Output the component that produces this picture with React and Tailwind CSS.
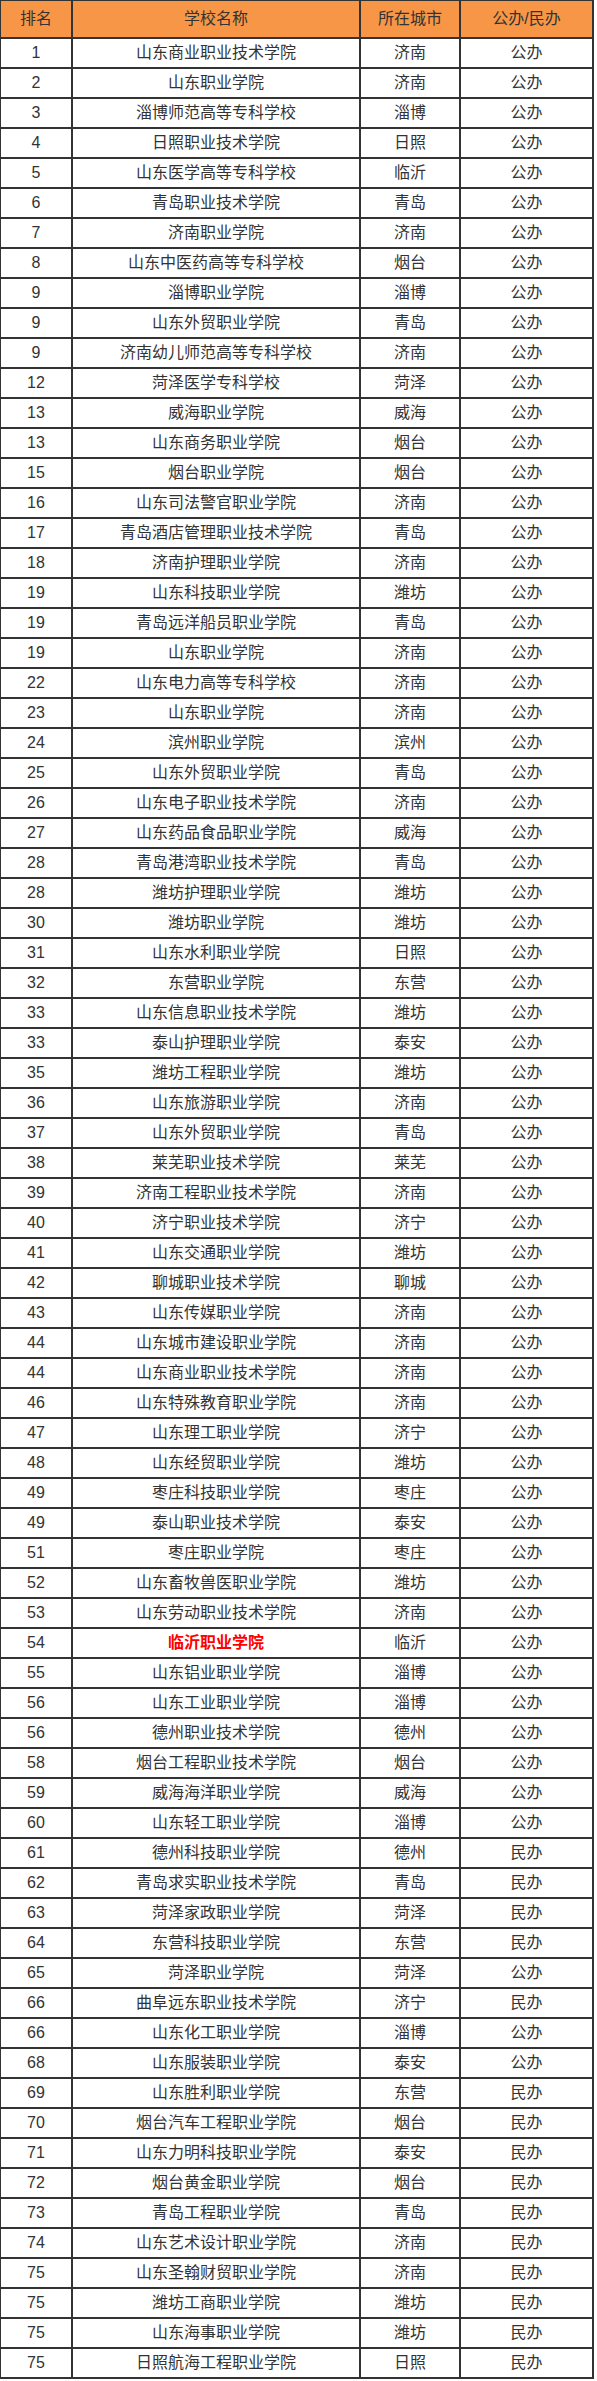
const rows = [
  ["1", "山东商业职业技术学院", "济南", "公办"],
  ["2", "山东职业学院", "济南", "公办"],
  ["3", "淄博师范高等专科学校", "淄博", "公办"],
  ["4", "日照职业技术学院", "日照", "公办"],
  ["5", "山东医学高等专科学校", "临沂", "公办"],
  ["6", "青岛职业技术学院", "青岛", "公办"],
  ["7", "济南职业学院", "济南", "公办"],
  ["8", "山东中医药高等专科学校", "烟台", "公办"],
  ["9", "淄博职业学院", "淄博", "公办"],
  ["9", "山东外贸职业学院", "青岛", "公办"],
  ["9", "济南幼儿师范高等专科学校", "济南", "公办"],
  ["12", "菏泽医学专科学校", "菏泽", "公办"],
  ["13", "威海职业学院", "威海", "公办"],
  ["13", "山东商务职业学院", "烟台", "公办"],
  ["15", "烟台职业学院", "烟台", "公办"],
  ["16", "山东司法警官职业学院", "济南", "公办"],
  ["17", "青岛酒店管理职业技术学院", "青岛", "公办"],
  ["18", "济南护理职业学院", "济南", "公办"],
  ["19", "山东科技职业学院", "潍坊", "公办"],
  ["19", "青岛远洋船员职业学院", "青岛", "公办"],
  ["19", "山东职业学院", "济南", "公办"],
  ["22", "山东电力高等专科学校", "济南", "公办"],
  ["23", "山东职业学院", "济南", "公办"],
  ["24", "滨州职业学院", "滨州", "公办"],
  ["25", "山东外贸职业学院", "青岛", "公办"],
  ["26", "山东电子职业技术学院", "济南", "公办"],
  ["27", "山东药品食品职业学院", "威海", "公办"],
  ["28", "青岛港湾职业技术学院", "青岛", "公办"],
  ["28", "潍坊护理职业学院", "潍坊", "公办"],
  ["30", "潍坊职业学院", "潍坊", "公办"],
  ["31", "山东水利职业学院", "日照", "公办"],
  ["32", "东营职业学院", "东营", "公办"],
  ["33", "山东信息职业技术学院", "潍坊", "公办"],
  ["33", "泰山护理职业学院", "泰安", "公办"],
  ["35", "潍坊工程职业学院", "潍坊", "公办"],
  ["36", "山东旅游职业学院", "济南", "公办"],
  ["37", "山东外贸职业学院", "青岛", "公办"],
  ["38", "莱芜职业技术学院", "莱芜", "公办"],
  ["39", "济南工程职业技术学院", "济南", "公办"],
  ["40", "济宁职业技术学院", "济宁", "公办"],
  ["41", "山东交通职业学院", "潍坊", "公办"],
  ["42", "聊城职业技术学院", "聊城", "公办"],
  ["43", "山东传媒职业学院", "济南", "公办"],
  ["44", "山东城市建设职业学院", "济南", "公办"],
  ["44", "山东商业职业技术学院", "济南", "公办"],
  ["46", "山东特殊教育职业学院", "济南", "公办"],
  ["47", "山东理工职业学院", "济宁", "公办"],
  ["48", "山东经贸职业学院", "潍坊", "公办"],
  ["49", "枣庄科技职业学院", "枣庄", "公办"],
  ["49", "泰山职业技术学院", "泰安", "公办"],
  ["51", "枣庄职业学院", "枣庄", "公办"],
  ["52", "山东畜牧兽医职业学院", "潍坊", "公办"],
  ["53", "山东劳动职业技术学院", "济南", "公办"],
  ["54", "临沂职业学院", "临沂", "公办", true],
  ["55", "山东铝业职业学院", "淄博", "公办"],
  ["56", "山东工业职业学院", "淄博", "公办"],
  ["56", "德州职业技术学院", "德州", "公办"],
  ["58", "烟台工程职业技术学院", "烟台", "公办"],
  ["59", "威海海洋职业学院", "威海", "公办"],
  ["60", "山东轻工职业学院", "淄博", "公办"],
  ["61", "德州科技职业学院", "德州", "民办"],
  ["62", "青岛求实职业技术学院", "青岛", "民办"],
  ["63", "菏泽家政职业学院", "菏泽", "民办"],
  ["64", "东营科技职业学院", "东营", "民办"],
  ["65", "菏泽职业学院", "菏泽", "公办"],
  ["66", "曲阜远东职业技术学院", "济宁", "民办"],
  ["66", "山东化工职业学院", "淄博", "公办"],
  ["68", "山东服装职业学院", "泰安", "公办"],
  ["69", "山东胜利职业学院", "东营", "民办"],
  ["70", "烟台汽车工程职业学院", "烟台", "民办"],
  ["71", "山东力明科技职业学院", "泰安", "民办"],
  ["72", "烟台黄金职业学院", "烟台", "民办"],
  ["73", "青岛工程职业学院", "青岛", "民办"],
  ["74", "山东艺术设计职业学院", "济南", "民办"],
  ["75", "山东圣翰财贸职业学院", "济南", "民办"],
  ["75", "潍坊工商职业学院", "潍坊", "民办"],
  ["75", "山东海事职业学院", "潍坊", "民办"],
  ["75", "日照航海工程职业学院", "日照", "民办"],
];

const cell = "flex items-center justify-center border-r-2 border-[#333333]";

export default function App() {
  return (
    <div className="min-h-[2381px] bg-white">
      <div
        className="w-[594px] border-l border-t border-[#333333] text-[16px] text-[#333333] leading-none"
        style={{ fontFamily: '"Liberation Sans", "Noto Sans CJK SC", sans-serif' }}
      >
        <div className="grid grid-cols-[72px_288px_100px_133px] h-[38px] border-b-2 border-[#333333] bg-[#f79646]">
          <div className={cell}>排名</div>
          <div className={cell}>学校名称</div>
          <div className={cell}>所在城市</div>
          <div className={cell}>公办/民办</div>
        </div>
        {rows.map(([rank, name, city, type, hot], i) => (
          <div key={i} className="grid grid-cols-[72px_288px_100px_133px] h-[30px] border-b-2 border-[#333333]">
            <div className={cell}>{rank}</div>
            <div className={cell}>
              {hot ? <span className="font-bold text-[#ff0000]">{name}</span> : name}
            </div>
            <div className={cell}>{city}</div>
            <div className={cell}>{type}</div>
          </div>
        ))}
      </div>
    </div>
  );
}
